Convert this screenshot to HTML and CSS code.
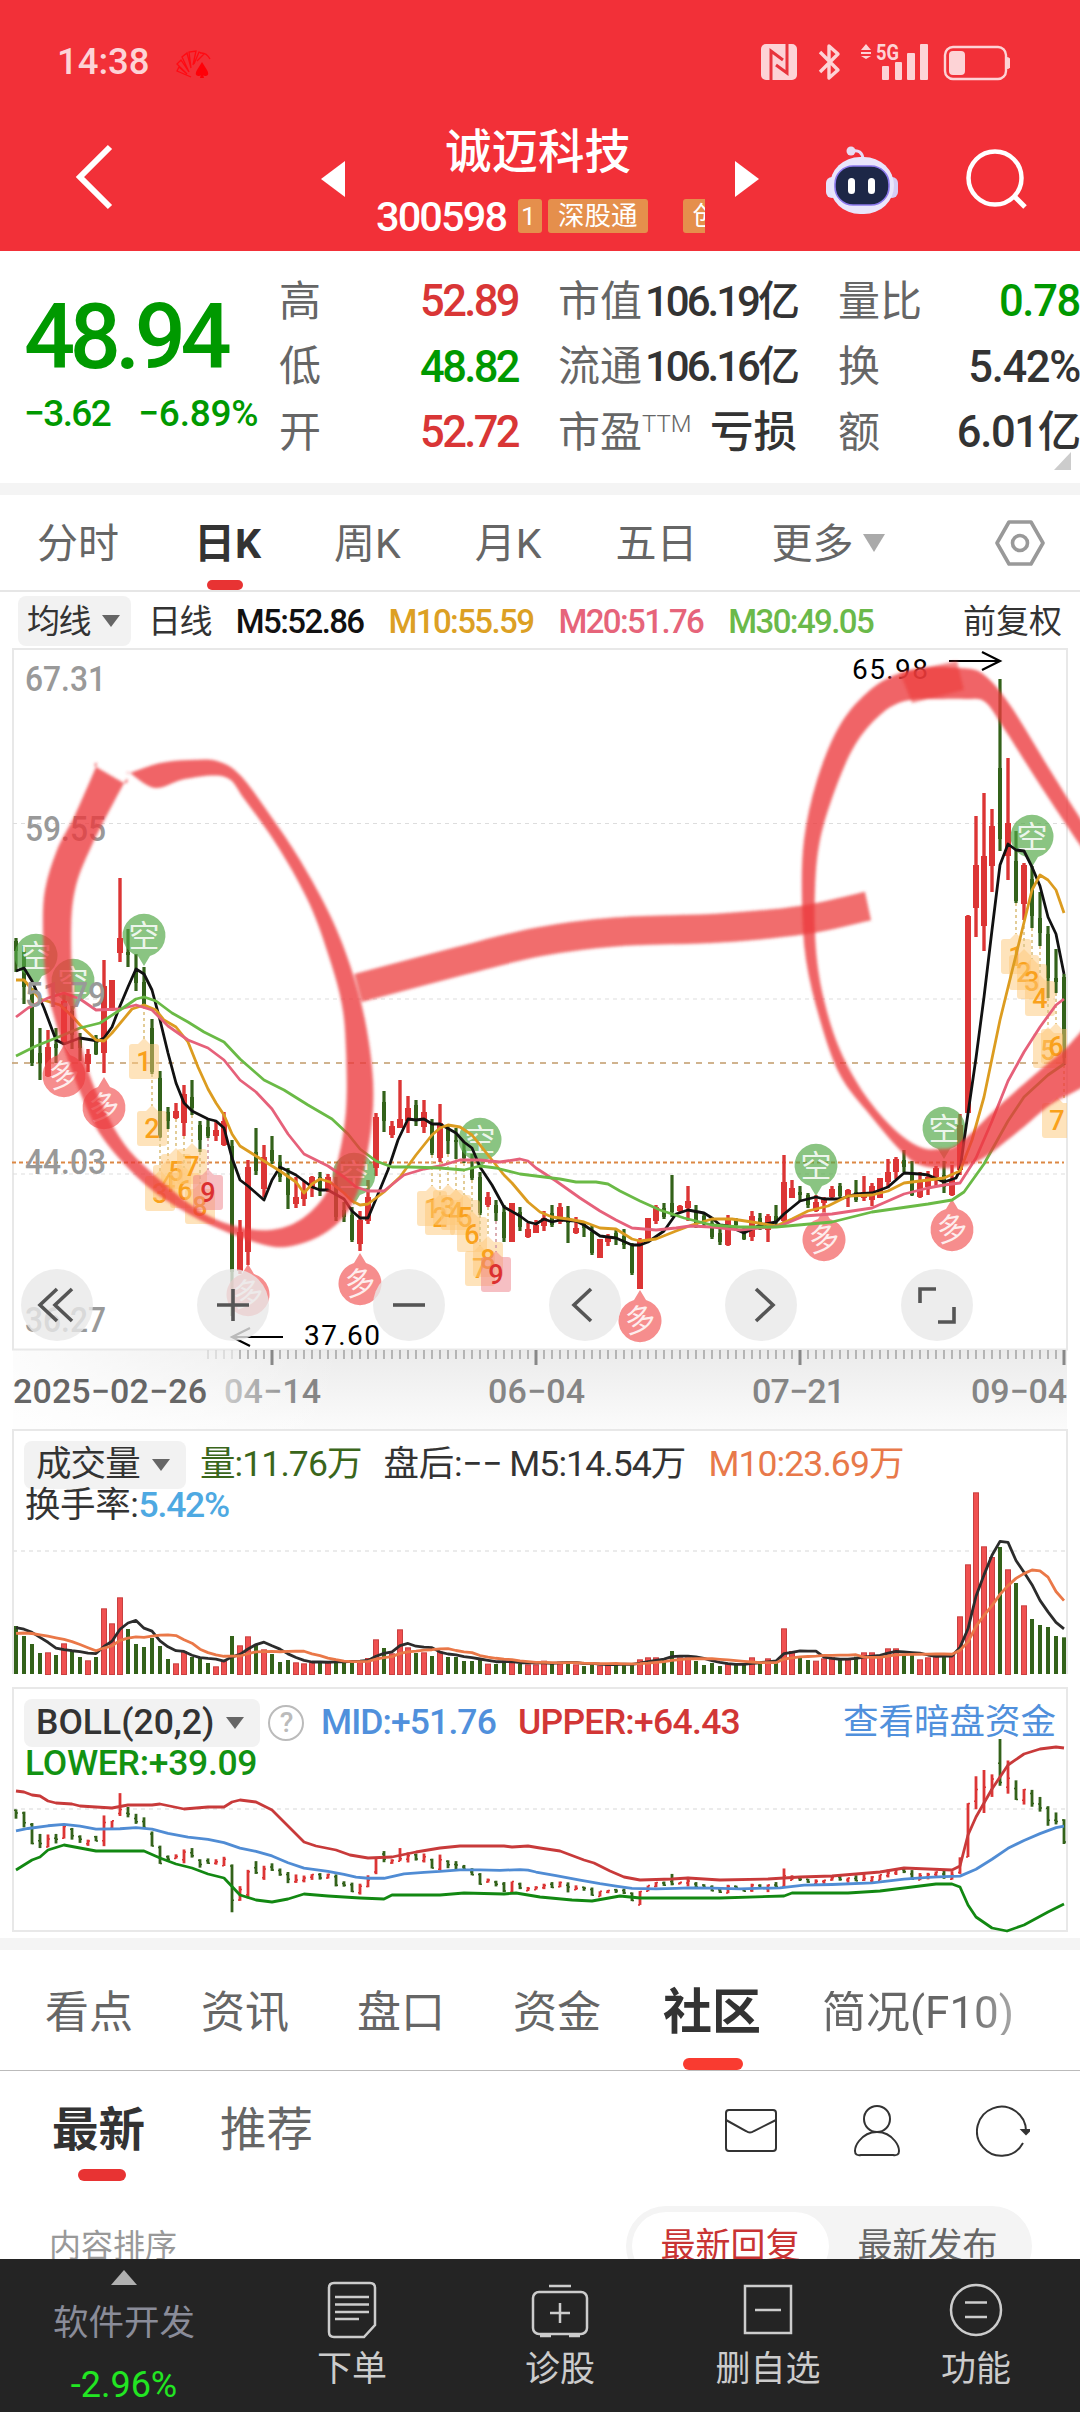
FILE: index.html
```html
<!DOCTYPE html>
<html lang="zh-CN">
<head>
  <meta charset="UTF-8">
  <meta name="viewport" content="width=device-width, initial-scale=1.0">
  <title>诚迈科技 300598</title>
  <link rel="stylesheet" href="styles.css">
</head>
<body>
<div class="page">

  <header class="header">
    <div class="status-bar">
      <span class="clock">14:38</span>
      <svg class="carrier" width="36" height="30" viewBox="0 0 36 30">
        <path d="M16 27 2 21l2-4 8 7M12 24 2 14l4-4 8 12M14 22 7 7l5-4 4 15M16 18 14 2l7-1-3 14M19 14l5-12 5 2-7 7M25 3q6-1 10 6" fill="none" stroke="#ff0a12" stroke-width="1.3"/>
        <path d="M27 12l-5 8q-3 5 1 6 3 0 3-2l-1 4h4l-1-4q0 2 3 2 4-1 1-6z" fill="#ff0008"/>
      </svg>
      <svg class="status-icons" width="250" height="44" viewBox="760 40 250 44">
        <rect x="761" y="44" width="36" height="36" rx="5" fill="#fdd3d6"/>
        <path d="M771 80V51l12 9M787 44v29l-11-8" fill="none" stroke="#e8343c" stroke-width="3"/>
        <path d="M820 52l18 18-9 8V46l9 8-18 18" fill="none" stroke="#fdd3d6" stroke-width="3.4" stroke-linejoin="round"/>
        <path d="M861 50l5-6 5 6zM861 52h10v2h-10zM861 56h10l-5 3z" fill="#fdd3d6"/>
        <text x="876" y="60" class="net" textLength="23" lengthAdjust="spacingAndGlyphs">5G</text>
        <g fill="#fdd3d6">
          <rect x="882" y="66" width="7" height="14" rx="1"/>
          <rect x="895" y="62" width="7" height="18" rx="1"/>
          <rect x="907" y="53" width="8" height="27" rx="1"/>
          <rect x="920" y="44" width="8" height="36" rx="1"/>
          <rect x="949" y="51" width="16" height="24" rx="4"/>
          <path d="M1007 57q4 0 4 6t-4 6z"/>
        </g>
        <rect x="945" y="47" width="61" height="32" rx="8" fill="none" stroke="#fdd3d6" stroke-width="2.4"/>
      </svg>
    </div>
    <div class="title-bar">
      <svg class="back" width="40" height="66" viewBox="0 0 40 66"><path d="M35 3 5 33l30 30" fill="none" stroke="#fff" stroke-width="6"/></svg>
      <svg class="prev" width="24" height="36" viewBox="0 0 24 36"><path d="M24 0v36L0 18z" fill="#fff"/></svg>
      <div class="stock">
        <div class="stock-name">诚迈科技</div>
        <div class="stock-meta">
          <span class="stock-code">300598</span>
          <span class="tags"><i class="tag tag-one">1</i><i class="tag">深股通</i><i class="tag tag-cut">创</i></span>
        </div>
      </div>
      <svg class="next" width="24" height="36" viewBox="0 0 24 36"><path d="M0 0v36l24-18z" fill="#fff"/></svg>
      <svg class="robot" width="74" height="70" viewBox="0 0 74 70">
        <path d="M27 5q10-2 11 8" fill="none" stroke="#e6dcf7" stroke-width="3"/>
        <circle cx="26" cy="5" r="4.5" fill="#e8dcf2"/>
        <rect x="1" y="31" width="12" height="21" rx="6" fill="#e6e3fb"/>
        <rect x="61" y="31" width="12" height="21" rx="6" fill="#d5ccf4"/>
        <rect x="5" y="11" width="64" height="57" rx="30" fill="#e9e5fb"/>
        <rect x="10" y="20" width="54" height="39" rx="18" fill="#1d2747" stroke="#8b78ec" stroke-width="1.6"/>
        <rect x="23" y="32" width="7" height="16" rx="3.5" fill="#fff"/>
        <rect x="43" y="32" width="7" height="16" rx="3.5" fill="#fff"/>
      </svg>
      <svg class="search" width="62" height="62" viewBox="0 0 62 62"><circle cx="29" cy="30" r="26.500" fill="none" stroke="#fff" stroke-width="4.500"/><path d="M48 48l11 11" stroke="#fff" stroke-width="5"/></svg>
    </div>
  </header>

  <section class="quote">
    <div class="price">
      <div class="price-now">48.94</div>
      <div class="price-change"><span>−3.62</span><span class="pct">−6.89%</span></div>
    </div>
    <div class="quote-col">
      <div><label>高</label><b class="up">52.89</b></div>
      <div><label>低</label><b class="down">48.82</b></div>
      <div><label>开</label><b class="up">52.72</b></div>
    </div>
    <div class="quote-col cap">
      <div><label>市值</label><b>106.19亿</b></div>
      <div><label>流通</label><b>106.16亿</b></div>
      <div><label>市盈<sup>TTM</sup></label><b class="loss">亏损</b></div>
    </div>
    <div class="quote-col last">
      <div><label>量比</label><b class="down">0.78</b></div>
      <div><label>换</label><b>5.42%</b></div>
      <div><label>额</label><b>6.01亿</b></div>
    </div>
    <i class="corner"></i>
  </section>

  <nav class="period-tabs">
    <span>分时</span>
    <span class="active">日K</span>
    <span>周K</span>
    <span>月K</span>
    <span>五日</span>
    <span>更多<i class="tri"></i></span>
    <svg class="setting" width="50" height="50" viewBox="0 0 50 50"><path d="M14 4h22l12 21-12 21H14L2 25z" fill="none" stroke="#999" stroke-width="3.600" stroke-linejoin="round"/><circle cx="25" cy="25" r="7.500" fill="none" stroke="#999" stroke-width="3.600"/></svg>
  </nav>

  <div class="ma-row">
    <span class="pill">均线<i class="tri"></i></span>
    <span class="ma-day">日线</span>
    <span class="m5">M5:52.86</span>
    <span class="m10">M10:55.59</span>
    <span class="m20">M20:51.76</span>
    <span class="m30">M30:49.05</span>
    <span class="adjust">前复权</span>
  </div>

  <section class="kline">
    <svg id="kline" width="1080" height="781" viewBox="0 648 1080 781"></svg>
    <div class="chart-buttons">
      <button><svg viewBox="0 0 72 72"><path d="M36 20 19 36l17 16M51 20 34 36l17 16"/></svg></button>
      <button><svg viewBox="0 0 72 72"><path d="M20 36h32M36 20v32"/></svg></button>
      <button><svg viewBox="0 0 72 72"><path d="M20 36h32"/></svg></button>
      <button><svg viewBox="0 0 72 72"><path d="M42 20 25 36l17 16"/></svg></button>
      <button><svg viewBox="0 0 72 72"><path d="M31 20l17 16-17 16"/></svg></button>
      <button><svg viewBox="0 0 72 72"><path d="M19 34V20h16M37 53h16V38"/></svg></button>
    </div>
  </section>

  <section class="sub-chart volume">
    <svg id="volume" width="1080" height="258" viewBox="0 1429 1080 258"></svg>
    <div class="legend">
      <span class="pill">成交量<i class="tri"></i></span>
      <span class="vol">量:11.76万</span>
      <span class="after">盘后:−−</span>
      <span class="vm5">M5:14.54万</span>
      <span class="vm10">M10:23.69万</span>
    </div>
    <div class="legend-2">换手率:<span>5.42%</span></div>
  </section>

  <section class="sub-chart boll">
    <svg id="boll" width="1080" height="251" viewBox="0 1687 1080 251"></svg>
    <div class="legend">
      <span class="pill">BOLL(20,2)<i class="tri"></i></span>
      <i class="help">?</i>
      <span class="mid">MID:+51.76</span>
      <span class="upper">UPPER:+64.43</span>
      <span class="dark-pool">查看暗盘资金</span>
    </div>
    <div class="legend-2 lower">LOWER:+39.09</div>
  </section>

  <nav class="info-tabs">
    <span>看点</span>
    <span>资讯</span>
    <span>盘口</span>
    <span>资金</span>
    <span class="active">社区</span>
    <span class="fade">简况(F10)</span>
  </nav>

  <section class="feed">
    <div class="feed-tabs">
      <span class="active">最新</span>
      <span>推荐</span>
      <svg width="54" height="54" viewBox="0 0 54 54"><rect x="2" y="6" width="50" height="41" rx="3"/><path d="M2 16l20 11q4 3 8 0l22-11"/></svg>
      <svg width="54" height="54" viewBox="0 0 54 54"><circle cx="27" cy="15" r="13"/><path d="M27 28q-11 0-18 9-4 5-4 10t6 4h32q6 1 6-4t-4-10q-7-9-18-9z"/></svg>
      <svg width="54" height="54" viewBox="0 0 54 54"><path d="M47 39a24.500 24.500 0 1 1 3-12"/><path d="M46 26h8l-4 4z" fill="#333"/></svg>
    </div>
    <div class="sort">
      <span>内容排序</span>
      <div class="switch"><span class="on">最新回复</span><span>最新发布</span></div>
    </div>
  </section>

  <footer class="bottom-bar">
    <div class="sector">
      <i></i>
      <span>软件开发</span>
      <b>-2.96%</b>
    </div>
    <div class="action">
      <svg width="58" height="58" viewBox="0 0 58 58"><path d="M11 2h36q5 0 5 5v37L41 56H11q-5 0-5-5V7q0-5 5-5z"/><path d="M12 16h34M12 23.500h34M12 31h34M12 38h24"/></svg>
      <span>下单</span>
    </div>
    <div class="action">
      <svg width="58" height="58" viewBox="0 0 58 58"><rect x="2" y="11" width="54" height="42" rx="6"/><path d="M18 5h22M29 22v20M19 32h20M9 55h11M38 55h11"/></svg>
      <span>诊股</span>
    </div>
    <div class="action">
      <svg width="58" height="58" viewBox="0 0 58 58"><rect x="6" y="5" width="46" height="47"/><path d="M16 29h26"/></svg>
      <span>删自选</span>
    </div>
    <div class="action">
      <svg width="58" height="58" viewBox="0 0 58 58"><circle cx="29" cy="29" r="25"/><path d="M18 21.500h22M18 36h22"/></svg>
      <span>功能</span>
    </div>
  </footer>
</div>
<script src="charts.js"></script>
</body>
</html>
```
FILE: styles.css
```css
* {
  box-sizing: border-box;
}

body {
  margin: 0;
  background: #fff;
  font-family: Roboto, "Noto Sans CJK SC", sans-serif;
  color: #333;
  line-height: 1;
}

i {
  font-style: normal;
}

svg {
  display: block;
  flex: none;
}

.page {
  position: relative;
  width: 1080px;
  height: 2412px;
  overflow: hidden;
  white-space: nowrap;
}

/* Header */
.header {
  height: 251px;
  background: #f23038;
  color: #fff;
}

.status-bar {
  display: flex;
  align-items: center;
  height: 124px;
  padding: 0 70px 0 57px;
}

.clock {
  font-size: 36.500px;
  font-weight: 500;
  color: #fdd3d6;
}

.carrier {
  margin: 5px 0 0 25px;
}

.status-icons {
  margin-left: auto;
}

.net {
  font-size: 22px;
  font-weight: 700;
  fill: #fdd3d6;
}

.title-bar {
  display: flex;
  align-items: flex-start;
  height: 127px;
  padding-left: 75px;
}

.back {
  margin-top: 20px;
}

.prev {
  margin: 37px 0 0 206px;
}

.stock {
  width: 329px;
  margin: 5px 30px 0 31px;
}

.stock-name {
  padding-left: 69px;
  font-size: 46.500px;
  font-weight: 500;
}

.stock-meta {
  display: flex;
  align-items: center;
  margin-top: 20px;
}

.stock-code {
  width: 142px;
  font-size: 41.500px;
  font-weight: 500;
  letter-spacing: -1.900px;
}

.tags {
  display: flex;
  width: 187px;
  overflow: hidden;
}

.tag {
  flex: none;
  height: 34px;
  margin-right: 6px;
  padding: 0 10px;
  border-radius: 3px;
  background: #e58f4c;
  font-size: 26.500px;
  line-height: 33px;
}

.tag-one {
  width: 24px;
  padding: 0 3px;
}

.tag-cut {
  margin-left: 29px;
}

.next {
  margin-top: 37px;
}

.robot {
  margin: 22px 0 0 66px;
}

.search {
  margin: 24px 0 0 67px;
}

/* Quote */
.quote {
  position: relative;
  display: flex;
  height: 244px;
  padding-top: 18px;
  border-bottom: 12px solid #f4f4f4;
}

.price {
  width: 279px;
  padding: 24px 0 0 24px;
  color: #090;
}

.price-now {
  font-size: 90px;
  font-weight: 500;
  letter-spacing: -5.500px;
}

.price-change {
  display: flex;
  gap: 28px;
  margin-top: 12px;
  font-size: 37px;
  font-weight: 500;
  letter-spacing: -1.600px;
}

.price-change .pct {
  letter-spacing: -0.200px;
}

.quote-col {
  width: 241px;
  margin-right: 38px;
}

.quote-col.cap {
  margin-right: 39px;
}

.quote-col.last {
  margin-right: 0;
}

.quote-col div {
  display: flex;
  align-items: center;
  justify-content: space-between;
  height: 65.500px;
}

.quote-col label {
  font-size: 42px;
  color: #666;
}

.quote-col sup {
  font-size: 24px;
  font-weight: 300;
}

.quote-col b {
  margin-right: 2px;
  font-size: 43.500px;
  font-weight: 500;
  letter-spacing: -2.600px;
}

.cap b {
  font-size: 42px;
  letter-spacing: -3px;
}

.cap .loss {
  font-size: 43.500px;
  letter-spacing: 0;
}

.last b {
  margin-right: -1px;
  letter-spacing: -1.300px;
}

.quote-col .up {
  color: #d93636;
}

.quote-col .down {
  color: #090;
}

.corner {
  position: absolute;
  right: 9px;
  bottom: 13px;
  border-bottom: 18px solid #ccc;
  border-left: 17px solid transparent;
}

.tri {
  display: inline-block;
  border: 9px solid transparent;
  border-top: 12px solid #666;
  border-bottom: 0;
}

/* Tabs */
.period-tabs {
  display: flex;
  align-items: center;
  gap: 74px;
  height: 97px;
  padding-left: 37px;
  border-bottom: 2px solid #e6e6e6;
  font-size: 41px;
  color: #666;
}

.period-tabs span {
  position: relative;
  top: 2px;
}

.period-tabs .active {
  margin: 0 -1px 0 1px;
  font-weight: 700;
  color: #333;
}

.period-tabs .active::after {
  content: "";
  position: absolute;
  left: 13px;
  top: 56px;
  width: 36px;
  height: 10px;
  border-radius: 5px;
  background: #e83333;
}

.period-tabs .tri {
  margin: 0 0 6px 9px;
  border-width: 18px 11px 0;
  border-top-color: #aaa;
}

.period-tabs .setting {
  margin: 0 35px 0 auto;
}

.ma-row {
  display: flex;
  align-items: center;
  height: 56px;
  padding: 2px 18px 0 18px;
  font-size: 33px;
  letter-spacing: -1.600px;
}

.pill {
  display: flex;
  align-items: center;
  height: 50px;
  border-radius: 8px;
  background: #f2f2f2;
}

.ma-row .pill {
  width: 113px;
  padding-left: 9px;
}

.pill .tri {
  margin-left: 12px;
}

.ma-row span + span {
  margin-left: 25px;
}

.ma-row .ma-day {
  margin-left: 17px;
}

.m5, .m10, .m20, .m30 {
  font-weight: 500;
}

.m5 { color: #111; }
.m10 { color: #dca024; }
.m20 { color: #e6647a; }
.m30 { color: #6bb94a; }

.ma-row .adjust {
  margin-left: auto;
  letter-spacing: 0;
}

/* Charts */
.kline {
  position: relative;
  height: 781px;
}

.axis {
  font-size: 35px;
  font-weight: 500;
  fill: #999;
}

.date {
  font-size: 34px;
  font-weight: 500;
  fill: #858585;
}

.extreme {
  font-size: 28px;
  fill: #000;
}

.mark {
  font-size: 31px;
  fill: #fff;
  fill-opacity: 0.85;
  text-anchor: middle;
}

.count {
  font-size: 27px;
  font-weight: 500;
  text-anchor: middle;
}

.chart-buttons {
  position: absolute;
  left: 21px;
  top: 621px;
  display: flex;
  gap: 104px;
}

.chart-buttons button {
  width: 72px;
  height: 72px;
  padding: 0;
  border: 0;
  border-radius: 50%;
  background: rgba(232, 232, 232, 0.8);
}

.chart-buttons path {
  fill: none;
  stroke: #555;
  stroke-width: 3.600;
}

.sub-chart {
  position: relative;
}

.volume {
  height: 258px;
}

.boll {
  height: 263px;
  border-bottom: 12px solid #f4f4f4;
}

.legend {
  position: absolute;
  left: 24px;
  top: 12px;
  display: flex;
  align-items: center;
  width: 1032px;
  font-size: 35.500px;
  letter-spacing: -0.900px;
}

.legend .pill {
  width: 162px;
  height: 48px;
  padding-left: 12px;
}

.boll .pill {
  width: 236px;
  letter-spacing: 0;
}

.boll .legend {
  font-weight: 500;
}

.legend-2 {
  position: absolute;
  left: 25px;
  top: 59px;
  font-size: 35.500px;
  letter-spacing: -0.400px;
}

.legend-2 span {
  font-weight: 500;
  color: #4ea9e2;
  letter-spacing: -1.200px;
}

.boll .lower {
  top: 59px;
  font-weight: 500;
  color: #129212;
  letter-spacing: -0.300px;
}

.vol {
  margin-left: 14px;
  color: #3a661b;
}

.after {
  margin-left: 22px;
  letter-spacing: -0.300px;
}

.vm5 {
  margin-left: 7px;
}

.vm10 {
  margin-left: 23px;
  color: #e8794a;
}

.help {
  width: 36px;
  height: 36px;
  margin-left: 8px;
  border: 2.500px solid #bbb;
  border-radius: 50%;
  color: #bbb;
  font-size: 28px;
  line-height: 32px;
  text-align: center;
}

.mid {
  margin-left: 17px;
  color: #5090dc;
}

.upper {
  margin-left: 22px;
  color: #d23636;
  letter-spacing: -0.700px;
}

.dark-pool {
  margin-left: auto;
  color: #5090dc;
  font-weight: 400;
  letter-spacing: 0;
}

/* Community */
.info-tabs {
  display: flex;
  align-items: center;
  height: 121px;
  padding: 5px 0 0 45px;
  border-bottom: 1px solid #bbb;
  font-size: 44px;
  color: #666;
}

.info-tabs span {
  position: relative;
  margin-right: 68px;
}

.info-tabs .active {
  margin: 0 61px 0 -6px;
  font-size: 49px;
  font-weight: 700;
  color: #333;
}

.info-tabs .active::after {
  content: "";
  position: absolute;
  left: 20px;
  top: 70px;
  width: 60px;
  height: 12px;
  border-radius: 6px;
  background: #f93b30;
}

.info-tabs .fade {
  margin: 0;
  background: linear-gradient(90deg, #666 75%, #aaa);
  background-clip: text;
  -webkit-background-clip: text;
  color: transparent;
}

.feed {
  height: 188px;
  overflow: hidden;
}

.feed-tabs {
  display: flex;
  align-items: center;
  height: 119px;
  padding: 0 50px 0 52px;
  font-size: 46.500px;
  color: #666;
}

.feed-tabs span:nth-child(2) {
  margin: 0 auto 0 75px;
}

.feed-tabs .active {
  position: relative;
  font-weight: 700;
  color: #333;
}

.feed-tabs .active::after {
  content: "";
  position: absolute;
  left: 26px;
  top: 62px;
  width: 48px;
  height: 12px;
  border-radius: 6px;
  background: #e83333;
}

.feed-tabs svg {
  margin-left: 72px;
  fill: none;
  stroke: #333;
  stroke-width: 2;
}

.sort {
  display: flex;
  justify-content: space-between;
  margin-top: 16px;
  padding: 0 48px 0 49px;
  font-size: 32px;
  line-height: 80px;
  color: #999;
}

.switch {
  display: flex;
  width: 406px;
  height: 80px;
  padding: 6px;
  border-radius: 40px;
  background: #f4f4f4;
  font-size: 35px;
  line-height: 70px;
  color: #666;
}

.switch span {
  flex: 1;
  border-radius: 34px;
  text-align: center;
}

.switch .on {
  background: #fff;
  color: #c93434;
}

.bottom-bar {
  display: flex;
  height: 153px;
  background: #242424;
  color: #ccc;
  font-size: 35px;
}

.sector {
  display: flex;
  flex-direction: column;
  align-items: center;
  width: 248px;
  padding-top: 11px;
}

.sector i {
  border: 13px solid transparent;
  border-top: 0;
  border-bottom: 15px solid #b0b0b0;
}

.sector span {
  margin-top: 21px;
  font-size: 35.500px;
  color: #8a8c99;
}

.sector b {
  margin-top: 25px;
  font-weight: 400;
  font-size: 36px;
  color: #22e622;
}

.action {
  display: flex;
  flex-direction: column;
  align-items: center;
  width: 208px;
  padding-top: 22px;
}

.action svg {
  fill: none;
  stroke: #ccc;
  stroke-width: 2.500;
}

.action span {
  margin-top: 13px;
}
```
FILE: charts.js
```js
// [high, low, body top, body bottom, up], one candle every 8px
const candles = [
  [938,972,941,951,0],[946,1004,951,987,0],[988,1066,993,1063,0],[1028,1080,1053,1063,0],[1030,1077,1047,1076,1],[1028,1063,1044,1048,0],
  [993,1045,1001,1044,1],[1006,1049,1011,1035,0],[1033,1061,1038,1048,0],[1049,1072,1054,1064,1],[1035,1055,1038,1054,0],[960,1073,986,1053,1],
  [980,1011,980,1008,1],[878,962,938,953,1],[929,967,952,955,0],[954,991,971,983,0],[967,1006,982,1004,0],[1019,1074,1028,1072,0],
  [1071,1138,1078,1137,0],[1107,1129,1112,1121,0],[1103,1119,1111,1118,1],[1085,1136,1094,1123,1],[1080,1115,1097,1108,0],[1121,1152,1125,1140,0],
  [1118,1138,1127,1136,0],[1121,1141,1130,1136,1],[1112,1146,1121,1145,1],[1140,1316,1146,1272,0],[1220,1274,1232,1271,1],[1160,1265,1167,1252,1],
  [1128,1175,1152,1171,0],[1145,1197,1157,1189,1],[1136,1164,1150,1161,0],[1155,1182,1162,1177,0],[1168,1209,1177,1195,0],[1177,1208,1197,1204,1],
  [1181,1206,1190,1199,1],[1176,1197,1177,1187,1],[1172,1196,1177,1190,0],[1174,1192,1177,1190,1],[1177,1221,1185,1217,0],[1202,1222,1210,1217,0],
  [1207,1242,1215,1240,0],[1211,1251,1220,1244,1],[1180,1224,1197,1221,1],[1113,1176,1117,1168,1],[1091,1132,1102,1121,0],[1121,1138,1126,1135,1],
  [1080,1128,1119,1128,1],[1096,1133,1108,1121,1],[1100,1126,1105,1120,0],[1100,1133,1112,1127,1],[1119,1155,1123,1153,0],[1104,1162,1123,1158,1],
  [1125,1154,1128,1141,0],[1128,1159,1140,1142,0],[1142,1163,1150,1158,0],[1154,1180,1168,1178,0],[1172,1215,1177,1213,0],[1192,1207,1197,1205,1],
  [1200,1221,1205,1213,0],[1205,1242,1212,1238,0],[1203,1242,1203,1242,1],[1207,1231,1212,1227,0],[1223,1238,1229,1237,1],[1220,1233,1225,1233,1],
  [1211,1231,1218,1226,1],[1205,1227,1213,1225,0],[1203,1224,1207,1222,1],[1206,1243,1217,1223,0],[1217,1234,1228,1233,1],[1222,1237,1224,1228,0],
  [1225,1255,1232,1253,0],[1239,1258,1239,1258,1],[1234,1246,1236,1242,1],[1230,1245,1233,1238,0],[1229,1249,1236,1245,0],[1243,1275,1246,1273,0],
  [1238,1289,1240,1289,1],[1218,1239,1218,1239,1],[1205,1224,1207,1221,1],[1203,1219,1208,1217,0],[1175,1217,1203,1212,0],[1205,1213,1206,1211,1],
  [1186,1221,1201,1208,1],[1205,1228,1212,1223,0],[1213,1226,1216,1224,0],[1217,1239,1223,1237,0],[1225,1245,1233,1242,0],[1215,1246,1220,1245,1],
  [1218,1227,1220,1225,0],[1227,1240,1232,1239,0],[1211,1241,1216,1237,1],[1213,1230,1218,1227,0],[1214,1242,1216,1230,1],[1205,1225,1216,1221,0],
  [1155,1226,1182,1221,1],[1180,1198,1188,1198,1],[1186,1201,1192,1195,0],[1193,1208,1195,1205,0],[1195,1212,1202,1211,1],[1197,1212,1198,1203,1],
  [1186,1200,1189,1197,1],[1183,1200,1186,1196,0],[1189,1207,1190,1197,1],[1180,1202,1192,1200,0],[1176,1201,1192,1198,1],[1183,1206,1186,1200,1],
  [1178,1198,1178,1198,1],[1159,1188,1172,1182,1],[1157,1179,1159,1172,1],[1150,1172,1160,1167,0],[1161,1196,1175,1195,0],[1172,1198,1182,1197,1],
  [1171,1195,1177,1187,1],[1166,1187,1168,1177,1],[1161,1193,1175,1187,0],[1165,1196,1180,1195,1],[1114,1175,1125,1170,1],[915,1113,916,1113,1],
  [816,937,865,908,1],[793,951,856,926,1],[809,892,826,866,1],[679,851,768,839,0],[758,880,823,856,1],[831,903,861,901,0],
  [863,920,865,904,1],[866,928,879,916,0],[892,946,918,933,0],[926,998,934,978,0],[949,993,978,982,0],[974,1065,977,1058,0]
];

const ma5 = '16,971 24,968 32,981 44,1008 56,1040 64,1044 80,1038 98,1041 104,1038 112,1027 120,1006 128,987 136,969 144,974 152,990 160,1020 168,1053 176,1083 184,1103 192,1111 208,1119 216,1121 224,1128 232,1158 240,1180 248,1186 264,1200 272,1180 280,1167 296,1175 312,1187 320,1190 328,1190 344,1199 352,1211 360,1218 368,1218 376,1199 388,1170 398,1140 408,1119 416,1120 424,1119 432,1124 440,1124 456,1133 464,1142 472,1148 480,1167 492,1185 504,1207 520,1216 528,1222 536,1224 544,1219 552,1222 560,1220 576,1221 584,1225 600,1236 616,1238 632,1245 640,1245 648,1242 664,1231 676,1214 688,1210 704,1213 712,1218 720,1225 728,1226 744,1233 760,1225 776,1222 784,1214 800,1201 816,1197 824,1199 840,1199 856,1194 872,1193 888,1187 904,1173 920,1174 928,1175 944,1182 956,1178 960,1170 964,1141 976,1058 984,997 992,930 1000,865 1008,844 1016,850 1024,851 1032,867 1040,886 1048,917 1056,934 1064,974';
const ma10 = '16,980 24,980 40,999 60,1005 72,1016 80,1025 96,1040 104,1041 112,1033 132,1009 144,1005 156,1010 164,1020 176,1027 188,1042 198,1067 208,1089 216,1103 224,1115 232,1134 240,1146 256,1156 280,1171 296,1182 304,1193 312,1184 320,1179 330,1182 344,1193 352,1201 360,1205 368,1204 384,1192 400,1177 416,1155 432,1135 440,1128 448,1125 460,1127 472,1135 488,1155 504,1175 512,1183 528,1202 540,1212 552,1217 568,1219 584,1222 600,1228 616,1229 632,1239 640,1241 656,1239 676,1231 692,1225 712,1219 732,1219 752,1222 776,1226 792,1219 808,1211 828,1206 848,1196 872,1195 888,1191 904,1183 928,1180 944,1178 960,1171 972,1140 984,1097 1000,1020 1016,955 1032,890 1040,875 1048,880 1056,890 1064,913';
const ma20 = '16,1017 28,1008 48,998 64,993 80,999 96,1010 120,1009 136,1005 152,1010 168,1026 188,1040 208,1048 224,1060 240,1080 256,1092 272,1109 288,1134 304,1154 328,1166 344,1177 356,1187 368,1191 384,1191 404,1175 424,1169 440,1166 460,1160 480,1160 500,1162 520,1159 528,1161 536,1168 556,1181 580,1198 600,1211 616,1220 632,1228 656,1230 676,1228 690,1226 712,1227 740,1230 780,1226 804,1216 832,1214 872,1208 904,1194 928,1188 944,1185 960,1183 976,1158 992,1121 1008,1081 1024,1052 1040,1027 1056,1005 1064,999';
const ma30 = '16,1056 36,1046 56,1038 80,1028 100,1023 120,1010 136,999 144,997 156,1001 172,1013 188,1022 204,1032 224,1042 240,1059 264,1080 284,1090 308,1105 332,1119 348,1134 360,1149 376,1161 392,1167 410,1167 440,1168 464,1170 480,1166 496,1168 520,1174 560,1179 576,1182 596,1182 608,1184 620,1191 640,1201 660,1210 684,1218 712,1225 740,1227 776,1227 832,1222 872,1212 928,1204 952,1200 964,1192 984,1164 1008,1121 1024,1097 1048,1075 1064,1064';

const volumes = [
  144,114,90,63,65,57,92,72,51,41,51,197,152,230,135,90,81,108,84,45,32,69,51,48,33,23,39,114,86,113,90,74,60,
  36,42,35,32,35,36,38,40,35,40,40,48,104,78,62,134,80,63,65,54,67,51,51,39,39,45,31,30,40,38,30,29,29,
  40,32,37,35,29,24,33,26,29,30,30,30,44,50,50,48,69,50,50,39,27,33,24,33,27,27,50,32,47,40,137,69,54,
  42,40,47,50,42,44,52,65,65,54,77,77,57,57,44,50,57,62,57,173,329,545,383,351,381,314,273,206,165,147,141,114,110
];
// days before the visible range, for the averages
const before = [105,105,105,105,105,138,138,138,138];

const bollUpper = '16,1791 24,1792 32,1795 40,1796 48,1801 56,1803 72,1804 80,1806 96,1807 112,1808 128,1805 152,1805 160,1804 184,1809 208,1807 224,1807 232,1802 240,1800 256,1802 272,1810 288,1826 304,1842 316,1846 336,1850 350,1855 368,1858 392,1857 416,1852 440,1848 460,1846 504,1846 512,1847 528,1846 540,1848 560,1851 576,1857 584,1860 594,1863 610,1871 624,1877 640,1880 672,1879 688,1878 720,1880 768,1879 800,1877 832,1876 880,1872 904,1868 952,1870 960,1866 968,1835 976,1817 992,1789 1008,1765 1024,1754 1040,1749 1056,1747 1064,1748';
const bollLower = '16,1870 32,1860 40,1857 48,1850 64,1845 80,1848 96,1851 144,1851 160,1858 176,1864 192,1868 208,1874 224,1878 240,1895 256,1900 272,1902 288,1899 304,1894 328,1896 360,1898 384,1899 392,1895 440,1895 464,1893 504,1894 516,1893 540,1897 572,1900 592,1901 620,1896 640,1898 720,1898 784,1896 792,1893 848,1893 880,1891 904,1888 936,1884 952,1884 960,1887 968,1905 976,1917 992,1928 1007,1931 1024,1925 1048,1912 1064,1904';

const kong = [[36,956],[73,981],[144,936],[354,1175],[480,1140],[816,1166],[944,1129],[1032,837]];
const duo = [[64,1075],[104,1107],[248,1294],[360,1283],[640,1320],[824,1239],[952,1229]];
const counts = [
  [144,1061],[152,1128],[160,1193],[168,1182],[176,1171],[185,1190],[192,1166],[200,1206],[208,1192],
  [432,1208],[440,1217],[448,1207],[456,1212],[465,1217],[472,1234],[480,1268],[488,1259],[496,1274],
  [1016,956],[1024,972],[1032,981],[1040,998],[1048,1050],[1056,1046],[1057,1120]
];

const red = '#dc3535';
const green = '#33621a';
const xAt = i => 16 + i * 8;

function line(x1, y1, x2, y2, color, width, dash) {
  return `<path d="M${x1} ${y1}L${x2} ${y2}" stroke="${color}" stroke-width="${width}" stroke-dasharray="${dash || 'none'}" fill="none"/>`;
}

function poly(points, color, width) {
  return `<polyline points="${points}" fill="none" stroke="${color}" stroke-width="${width}" stroke-linejoin="round"/>`;
}

// smooth curve through the points
function curve(p, closed) {
  const n = p.length;
  const at = i => closed ? p[(i + n) % n] : p[Math.max(0, Math.min(n - 1, i))];
  let d = `M${p[0]}`;
  for (let i = 0; i < (closed ? n : n - 1); i++) {
    const a = at(i - 1), b = at(i), c = at(i + 1), e = at(i + 2);
    d += `C${b[0] + (c[0] - a[0]) / 6},${b[1] + (c[1] - a[1]) / 6} ${c[0] - (e[0] - b[0]) / 6},${c[1] - (e[1] - b[1]) / 6} ${c}`;
  }
  return d;
}

function drawKline() {
  let s = `<defs>
    <linearGradient id="axisBg" x1="0" y1="0" x2="0" y2="1"><stop offset="0" stop-color="#ebebeb"/><stop offset="1" stop-color="#fbfbfb"/></linearGradient>
    <linearGradient id="axisFade"><stop offset="0" stop-color="#fff" stop-opacity=".85"/><stop offset="1" stop-color="#fff" stop-opacity="0"/></linearGradient>
    <linearGradient id="dateFade"><stop offset="0" stop-color="#ccc"/><stop offset=".8" stop-color="#858585"/></linearGradient>
    <filter id="soft"><feGaussianBlur stdDeviation="1.4"/></filter>
    <clipPath id="plot"><rect x="13" y="648" width="1054" height="702"/></clipPath>
  </defs>`;
  s += '<rect x="13" y="1350" width="1054" height="79" fill="url(#axisBg)"/><rect x="13" y="1350" width="330" height="79" fill="url(#axisFade)"/>';
  s += '<rect x="13" y="649" width="1054" height="700.500" fill="#fff" stroke="#e8e8e8" stroke-width="2"/>';
  [823.5, 999, 1174].forEach(y => s += line(13, y, 1066, y, '#ddd', 1, '4 4'));
  s += line(12, 1063, 1064, 1063, '#c19b6a', 1.6, '6 6') + line(12, 1162.5, 1064, 1162.5, '#dc8844', 1.8, '4 3');

  candles.forEach((c, i) => {
    const x = xAt(i), color = c[4] ? red : green, w = c[4] ? 6 : 4;
    s += line(x, c[0], x, c[1], color, c[4] ? 3.4 : 3.2);
    s += `<rect x="${x - w / 2}" y="${c[2]}" width="${w}" height="${c[3] - c[2]}" fill="${color}"/>`;
  });

  s += '<g clip-path="url(#plot)">';
  counts.forEach(([x, y], n) => {
    const last = n === 8 || n === 17;
    const i = Math.round((x - 16) / 8) + (n === 24 ? 1 : 0);
    s += line(xAt(i), candles[i][1], xAt(i), y - 22, last ? '#d8a5aa' : '#dfc78c', 1.8, '3 3');
    s += `<path d="M${x - 12} ${y - 17}h6l6-6 6 6h6q3 0 3 3v29q0 3-3 3h-24q-3 0-3-3v-29q0-3 3-3z" fill="${last ? '#ee8088' : '#fdc878'}" opacity=".5"/>`;
    s += `<text class="count" x="${x}" y="${y + 10}" fill="${last ? '#dc3030' : '#f9a11c'}">${n % 9 + 1}</text>`;
  });
  kong.forEach(([x, y]) => {
    s += `<g transform="translate(${x} ${y})"><path d="M-6 20L0 30 6 20A21.500 21.500 0 1 0-6 20z" fill="#53a847" opacity=".68"/><text class="mark" y="11">空</text></g>`;
  });
  duo.forEach(([x, y]) => {
    s += `<g transform="translate(${x} ${y})"><path d="M-6-20L0-30 6-20A21.500 21.500 0 1 1-6-20z" fill="#f15252" opacity=".66"/><text class="mark" y="11" transform="rotate(-10)">多</text></g>`;
  });
  s += '</g>';

  s += poly(ma5, '#111', 2.8) + poly(ma10, '#dc9c20', 2.8) + poly(ma20, '#e6617a', 2.8) + poly(ma30, '#6aba46', 2.8);

  [[691, '67.31'], [841, '59.55'], [1007, '51.79'], [1174, '44.03'], [1332, '36.27']].forEach(([y, t]) => {
    s += `<text class="axis" x="25" y="${y}" textLength="81" lengthAdjust="spacingAndGlyphs">${t}</text>`;
  });
  s += '<text class="extreme" x="852" y="678.500" textLength="76">65.98</text><text class="extreme" x="304" y="1345" textLength="76">37.60</text>';
  s += '<path d="M949 661h50M982 652l18 9-18 9M283 1337h-50M250 1328l-18 9 18 9" fill="none" stroke="#000" stroke-width="2.200"/>';

  for (let x = 208; x <= 1064; x += 8) {
    const major = [272, 536, 800, 1064].includes(x);
    s += line(x, 1350, x, major ? 1365 : 1359, x < 240 ? '#ccc' : '#888', major ? 3 : 1.1);
  }
  [[13, 194, '2025−02−26', '#666'], [224, 97, '04−14', 'url(#dateFade)'], [488, 97, '06−04'], [752, 93, '07−21'], [971, 96, '09−04']].forEach(([x, w, t, fill]) => {
    s += `<text class="date" x="${x}" y="1403" textLength="${w}" style="${fill ? 'fill:' + fill : ''}">${t}</text>`;
  });

  // hand-drawn marks, doubled points keep a corner sharp
  const left = [[96,767],[96,767],[75,815],[57,850],[45,890],[43,930],[46,980],[55,1020],[68,1060],[82,1097],[100,1134],[130,1170],[160,1196],[200,1220],[240,1237],[275,1247],[300,1244],[325,1233],[345,1215],[360,1185],[371,1130],[373,1080],[365,1020],[350,965],[330,915],[300,860],[270,815],[240,775],[217,761],[190,760],[160,763],[130,773],[130,773],[155,788],[185,779],[225,777],[245,800],[280,850],[310,905],[330,960],[342,1005],[346,1050],[346,1110],[338,1160],[325,1195],[300,1220],[270,1230],[235,1226],[200,1211],[160,1180],[125,1145],[100,1100],[85,1060],[75,1010],[71,940],[75,890],[92,845],[124,783],[124,783]];
  const right = [[1095,840],[1080,818],[1050,770],[1010,705],[983,674],[960,668],[930,667],[900,673],[870,690],[840,725],[817,780],[804,840],[802,900],[806,960],[820,1020],[840,1075],[870,1115],[900,1150],[920,1165],[950,1168],[980,1160],[1020,1130],[1050,1105],[1095,1075],[1095,1022],[1064,1050],[1040,1070],[1000,1105],[960,1143],[940,1149],[920,1147],[895,1130],[865,1095],[840,1050],[824,1000],[816,950],[815,890],[820,840],[835,790],[855,745],[880,715],[905,701],[940,699],[965,699],[985,702],[1005,730],[1040,785],[1080,845],[1095,865]];
  const joint = [[358,988],[460,961],[538,942],[615,932],[720,928],[803,920],[868,906]];
  s += `<g filter="url(#soft)" fill="#ec3a3c" fill-opacity=".78">
    <path d="${curve(left, true)}"/>
    <path d="${curve(right, true)}"/>
    <path d="M900 673L957 661 964 690 912 703z" fill-opacity=".6"/>
    <path d="${curve(joint)}" fill="none" stroke="#ec3a3c" stroke-width="29" stroke-opacity=".74"/>
  </g>`;
  document.getElementById('kline').innerHTML = s;
}

function average(n) {
  const all = before.concat(volumes);
  return volumes.map((v, i) => {
    const end = i + before.length + 1;
    const sum = all.slice(end - n, end).reduce((a, b) => a + b, 0);
    return `${xAt(i)},${1674 - sum / n / 3}`;
  }).join(' ');
}

function frame(top, bottom) {
  return `<path d="M13 ${bottom}V${top + 1}H1067V${bottom}" fill="none" stroke="#e8e8e8" stroke-width="2"/>`;
}

function drawVolume() {
  let s = frame(1429, 1674) + line(13, 1551, 1066, 1551, '#e5e5e5', 1.5, '4 4');
  volumes.forEach((v, i) => {
    const x = xAt(i), h = v / 3;
    if (candles[i][4]) {
      s += `<rect x="${x - 2.5}" y="${1674.5 - h}" width="5" height="${h}" fill="#f05050" stroke="#c94040"/>`;
    } else {
      s += `<rect x="${x - 2}" y="${1674 - h}" width="4" height="${h}" fill="${green}"/>`;
    }
  });
  s += poly(average(5), '#2c2c2c', 2.8) + poly(average(10), '#ea7848', 2.8);
  document.getElementById('volume').innerHTML = s;
}

function drawBoll() {
  const y = v => 1739 + (v - 679) * 0.272;
  let s = frame(1687, 1931) + line(12, 1931, 1068, 1931, '#e8e8e8', 2) + line(13, 1809, 1066, 1809, '#e5e5e5', 1.5, '4 4');
  candles.forEach((c, i) => {
    const x = xAt(i), color = c[4] ? red : green;
    const open = y(c[4] ? c[3] : c[2]), close = y(c[4] ? c[2] : c[3]);
    s += line(x, y(c[0]), x, y(c[1]), color, 2.8) + line(x - 2, open, x, open, color, 1.5) + line(x, close, x + 2, close, color, 1.5);
  });
  const mid = ma20.split(' ').map(p => p.split(',')).map(p => `${p[0]},${y(+p[1])}`).join(' ');
  s += poly(bollUpper, '#c83a3a', 2.8) + poly(mid, '#508cd4', 2.8) + poly(bollLower, '#128812', 2.8);
  document.getElementById('boll').innerHTML = s;
}

drawKline();
drawVolume();
drawBoll();
```
